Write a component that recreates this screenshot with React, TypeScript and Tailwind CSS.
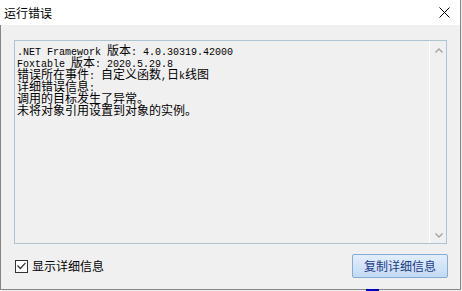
import React from 'react';

const lines = [
  '.NET Framework 版本: 4.0.30319.42000',
  'Foxtable 版本: 2020.5.29.8',
  '错误所在事件: 自定义函数,日k线图',
  '详细错误信息:',
  '调用的目标发生了异常。',
  '未将对象引用设置到对象的实例。',
];

// split a line into ascii / cjk runs so each gets its own font
const splitRuns = (s: string) => {
  const runs: { text: string; ascii: boolean }[] = [];
  for (const ch of s) {
    const ascii = ch.charCodeAt(0) < 128;
    const last = runs[runs.length - 1];
    if (last && last.ascii === ascii) last.text += ch;
    else runs.push({ text: ch, ascii });
  }
  return runs;
};

const Line: React.FC<{ text: string }> = ({ text }) => (
  <div className="h-[12px] leading-[12px] whitespace-pre text-black">
    {splitRuns(text).map((r, i) =>
      r.ascii ? (
        <span key={i} className="font-['Liberation_Mono',monospace] text-[10px] leading-[12px]">
          {r.text}
        </span>
      ) : (
        <span key={i} className="font-['Noto_Sans_CJK_SC',sans-serif] text-[12px] leading-[12px]">
          {r.text}
        </span>
      )
    )}
  </div>
);

export default function App() {
  return (
    <div className="relative w-[462px] h-[291px] bg-[#f0f0f0] overflow-hidden font-['Noto_Sans_CJK_SC',sans-serif]">
      <div className="w-[461px] h-[290px] flex flex-col border-r border-[#858585]">
        {/* Title bar */}
        <div className="h-[25px] bg-white flex items-center justify-between pl-[4px] pr-[10px]">
          <span className="text-[12px] leading-[12px] text-black">运行错误</span>
          <svg width="11" height="11" viewBox="0 0 11 11">
            <path d="M0.5 0.5 L10.5 10.5 M10.5 0.5 L0.5 10.5" stroke="#000" strokeWidth="1" />
          </svg>
        </div>

        {/* Body */}
        <div className="flex-1 flex flex-col bg-[#f0f0f0] border-l border-b border-[#858585] pt-[15px]">
          <div className="ml-[13px] w-[433px] h-[204px] border border-[#adc4d2] bg-[#f0f0f0] flex">
            <div className="flex-1 pl-[2px] pt-[1px]">
              {lines.map((l, i) => (
                <Line key={i} text={l} />
              ))}
            </div>
            <div className="w-[17px] border-l border-white flex flex-col justify-between items-center pt-[7px] pb-[5px] pl-[1px]">
              <svg width="8" height="5" viewBox="0 0 8 5">
                <path d="M0.5 4.5 L4 1 L7.5 4.5" stroke="#a3a3a3" strokeWidth="1.4" fill="none" />
              </svg>
              <svg width="8" height="5" viewBox="0 0 8 5">
                <path d="M0.5 0.5 L4 4 L7.5 0.5" stroke="#a3a3a3" strokeWidth="1.4" fill="none" />
              </svg>
            </div>
          </div>

          <div className="mt-[10px] flex items-center pl-[14px] pr-[12px]">
            <div className="flex items-center gap-[4px]">
              <div className="w-[13px] h-[13px] border border-[#333] bg-white flex items-center justify-center">
                <svg width="9" height="8" viewBox="0 0 9 8">
                  <path d="M0.5 3.5 L3.3 6.5 L8.5 0.8" stroke="#333" strokeWidth="1.2" fill="none" />
                </svg>
              </div>
              <span className="text-[12px] leading-[14px] text-black">显示详细信息</span>
            </div>
            <button className="ml-auto w-[96px] h-[24px] rounded-[2px] border border-[#84acd9] bg-gradient-to-b from-[#e2eefc] to-[#c3daf4] text-[12px] leading-[12px] text-[#1c3b86]">
              复制详细信息
            </button>
          </div>
        </div>
      </div>
      <div className="absolute left-[366px] top-[289px] w-[13px] h-[2px] bg-[#0000c4]" />
    </div>
  );
}
